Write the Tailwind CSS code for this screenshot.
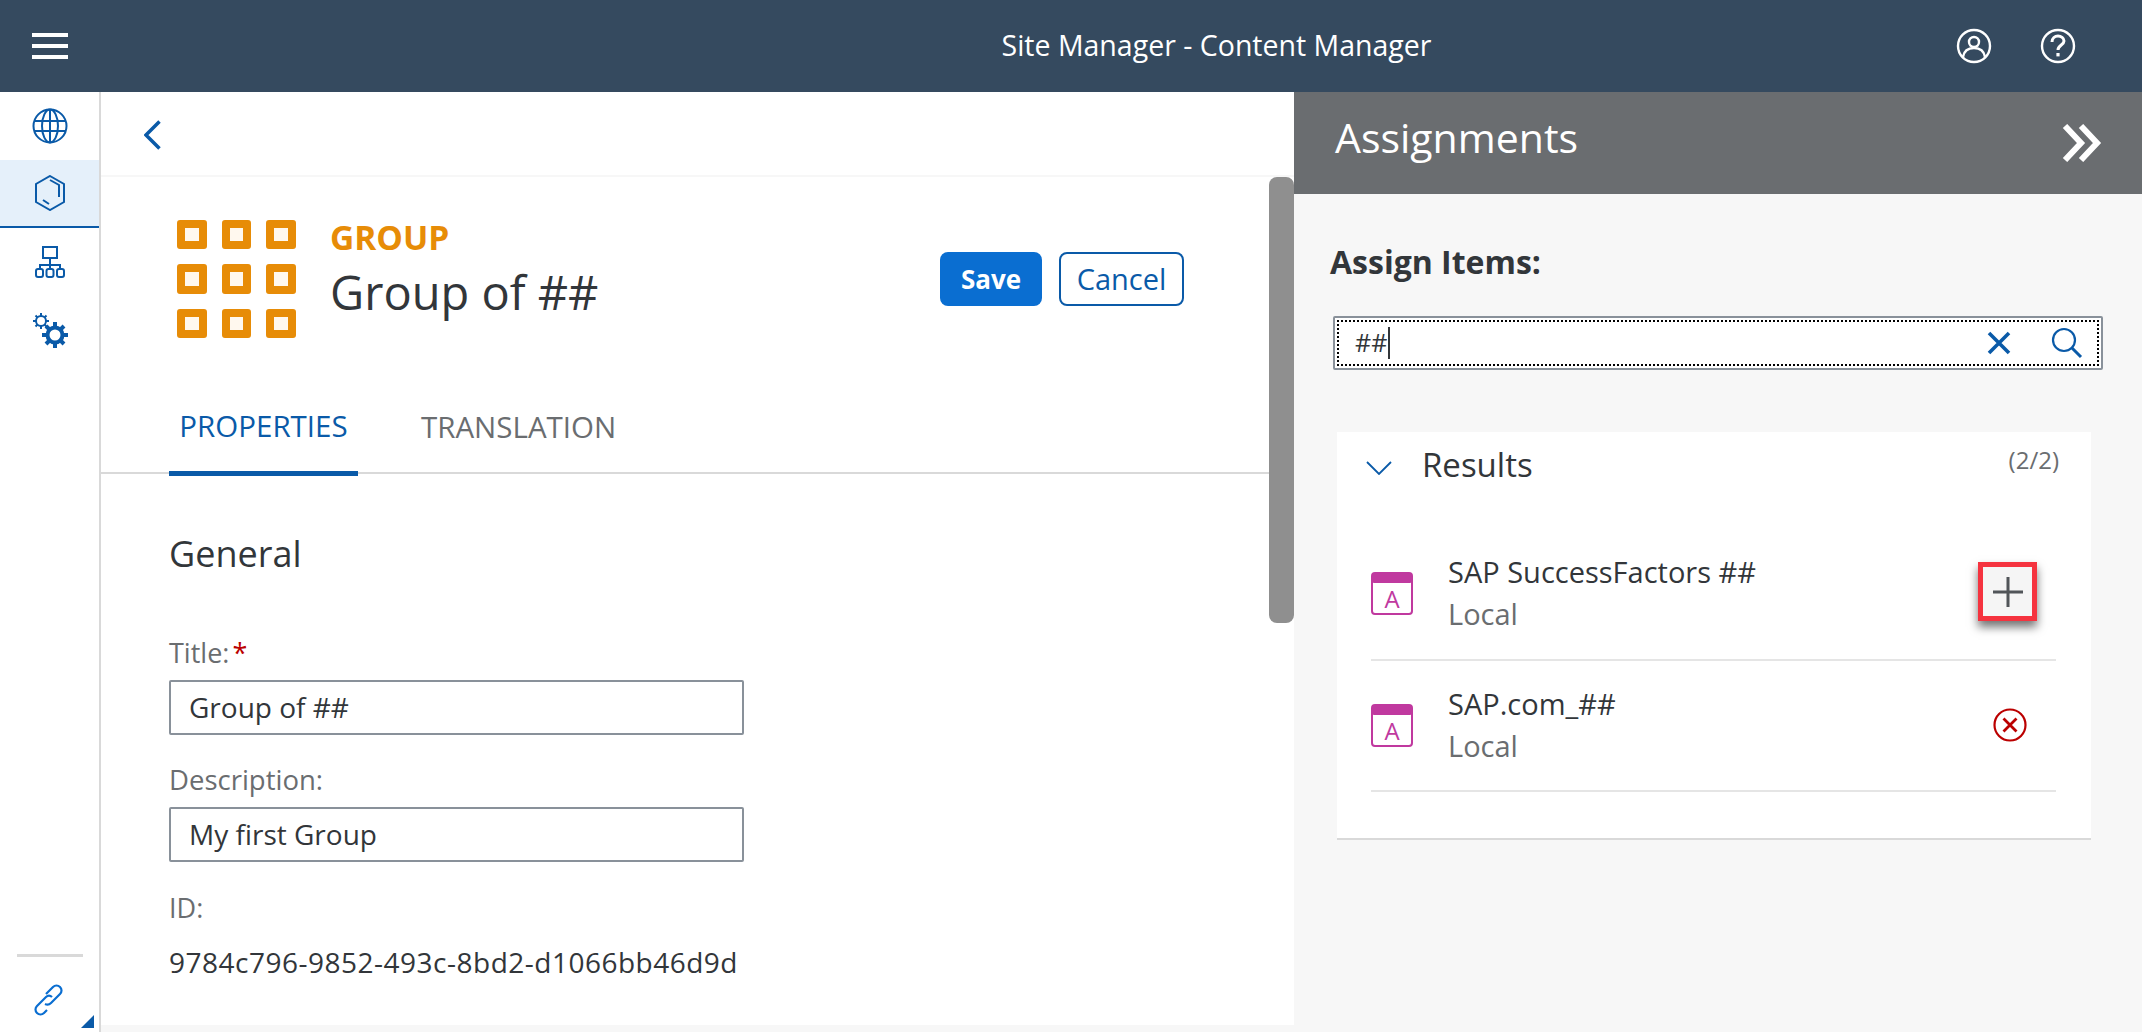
<!DOCTYPE html>
<html lang="en">
<head>
  <meta charset="UTF-8" />
  <title>Site Manager - Content Manager</title>
  <script src="https://cdn.jsdelivr.net/npm/@tailwindcss/browser@4"></script>
</head>
<body class="h-[1032px] overflow-hidden bg-white font-['Open_Sans',sans-serif] text-[#32363a]">
  <!-- shell bar -->
  <header class="h-[92px] bg-[#354a5f] flex items-center text-white">
    <div class="w-[99px] flex justify-center">
      <svg width="36" height="26" viewBox="0 0 36 26" fill="#fff"><rect x="0" y="0" width="36" height="4"/><rect x="0" y="11" width="36" height="4"/><rect x="0" y="22" width="36" height="4"/></svg>
    </div>
    <div class="flex-1 text-center text-[28.500px] pl-[378px] pb-[2px]">Site Manager - Content Manager</div>
    <div class="flex items-center gap-[48px] pr-[66px]">
      <svg width="36" height="36" viewBox="0 0 36 36" fill="none" stroke="#fff" stroke-width="2.4"><circle cx="18" cy="18" r="16"/><circle cx="18" cy="14" r="5"/><path d="M7 29c1-6 5-9 11-9s10 3 11 9"/></svg>
      <svg width="36" height="36" viewBox="0 0 36 36" fill="none" stroke="#fff" stroke-width="2.4"><circle cx="18" cy="18" r="16"/><path d="M12 14c0-4 3-6 6-6s6 2 6 5c0 4-6 4-6 9" stroke-width="3"/><rect x="16.4" y="25" width="3.2" height="3.4" fill="#fff" stroke="none"/></svg>
    </div>
  </header>

  <div class="flex h-[940px]">
    <!-- side navigation -->
    <nav class="w-[101px] shrink-0 border-r-2 border-[#d9d9d9] flex flex-col">
      <div class="h-[68px] flex items-center justify-center">
        <svg width="36" height="36" viewBox="0 0 36 36" fill="none" stroke="#0a5aa8" stroke-width="2"><circle cx="18" cy="18" r="16.5"/><ellipse cx="18" cy="18" rx="8" ry="16.5"/><path d="M18 1.5v33M2 13h32M2 23h32"/></svg>
      </div>
      <div class="h-[68px] flex items-center justify-center bg-[#e5f0fa] border-b-2 border-[#0a5aa8]">
        <svg width="30" height="36" viewBox="0 0 30 36" fill="none" stroke="#0a5aa8" stroke-width="2"><path d="M15 1 29 9v18l-14 8-14-8V9z"/><path d="M15 5l9 5v12M8 25l6 4"/></svg>
      </div>
      <div class="h-[68px] flex items-center justify-center">
        <svg width="30" height="32" viewBox="0 0 30 32" fill="none" stroke="#0a5aa8" stroke-width="2"><rect x="8" y="1" width="14" height="11"/><path d="M15 12v7M5 22v-3h20v3M15 19v3"/><rect x="1" y="23" width="7" height="8" rx="2"/><rect x="11.5" y="23" width="7" height="8" rx="2"/><rect x="22" y="23" width="7" height="8" rx="2"/></svg>
      </div>
      <div class="h-[68px] flex items-center justify-center">
        <svg width="36" height="36" viewBox="0 0 36 36" fill="none" stroke="#0a5aa8"><circle cx="9" cy="9" r="5" stroke-width="2"/><path d="M9 1v3M9 14v3M1 9h3M14 9h3M3.5 3.5l2 2M12.5 12.500l2 2M3.500 14.500l2-2M12.500 5.500l2-2" stroke-width="2"/><circle cx="23" cy="23" r="7.500" stroke-width="4"/><path d="M23 10v5M23 31v5M10 23h5M31 23h5M14 14l3.500 3.500M28.500 28.500 32 32M14 32l3.500-3.500M28.500 17.500 32 14" stroke-width="4"/></svg>
      </div>
      <div class="mt-auto h-[78px] flex flex-col items-center relative">
        <div class="w-[66px] h-[3px] bg-[#d9d9d9]"></div>
        <svg class="mt-[27px] -ml-[2px]" width="32" height="32" viewBox="0 0 32 32" fill="none" stroke="#0a6ed1" stroke-width="2.200"><path d="M13 10 20 3c2-2 5-2 7 0s2 5 0 7l-9 9c-2 2-4 2-6 1"/><path d="M19 13c-2-2-4-2-6 0l-9 9c-2 2-2 5 0 7s5 2 7 0l3-3"/></svg>
        <div class="absolute right-[5px] bottom-[4px] w-0 h-0 border-l-[13px] border-l-transparent border-b-[13px] border-b-[#0a5aa8]"></div>
      </div>
    </nav>

    <!-- group editor -->
    <main class="relative flex-1 flex flex-col min-w-0">
      <div class="h-[85px] shrink-0 border-b-2 border-[#f7f7f7] pl-[43px] pt-[28px]">
        <svg width="17" height="30" viewBox="0 0 17 30" fill="none" stroke="#0a5aa8" stroke-width="3.500"><path d="M15.500 1.500 2 15l13.500 13.500"/></svg>
      </div>
      <div class="h-[207px] shrink-0 flex pl-[76px] pr-[110px] pt-[43px]">
        <div class="grid grid-cols-3 gap-x-[15px] gap-y-[15px] w-[119px] h-[118px]">
          <div class="border-[8px] border-[#e78c07] rounded-[3px] bg-[#fff8ee]"></div>
          <div class="border-[8px] border-[#e78c07] rounded-[3px] bg-[#fff8ee]"></div>
          <div class="border-[8px] border-[#e78c07] rounded-[3px] bg-[#fff8ee]"></div>
          <div class="border-[8px] border-[#e78c07] rounded-[3px] bg-[#fff8ee]"></div>
          <div class="border-[8px] border-[#e78c07] rounded-[3px] bg-[#fff8ee]"></div>
          <div class="border-[8px] border-[#e78c07] rounded-[3px] bg-[#fff8ee]"></div>
          <div class="border-[8px] border-[#e78c07] rounded-[3px] bg-[#fff8ee]"></div>
          <div class="border-[8px] border-[#e78c07] rounded-[3px] bg-[#fff8ee]"></div>
          <div class="border-[8px] border-[#e78c07] rounded-[3px] bg-[#fff8ee]"></div>
        </div>
        <div class="ml-[34px] -mt-[1px]">
          <div class="text-[33.500px] leading-[36px] font-bold text-[#e78c07]">GROUP</div>
          <h1 class="text-[47px] leading-[56px] mt-[9px] text-[#32363a]">Group of ##</h1>
        </div>
        <div class="ml-auto flex gap-[17px] mt-[32px] h-[54px]">
          <button class="w-[102px] rounded-[8px] bg-[#0a6ed1] text-white text-[26px] font-bold">Save</button>
          <button class="w-[125px] rounded-[8px] border-2 border-[#0a5aa8] bg-white text-[#0a5aa8] text-[29px]">Cancel</button>
        </div>
      </div>
      <div class="h-[90px] shrink-0 flex pl-[68px] border-b-2 border-[#d9d9d9] mr-[25px] text-[29.500px]">
        <div class="w-[189px] h-[92px] pb-[2px] flex items-center justify-center border-b-[5px] border-[#0a5aa8] text-[#0a5aa8]">PROPERTIES</div>
        <div class="ml-[63px] h-[90px] pb-[4px] flex items-center text-[#6a6d70]">TRANSLATION</div>
      </div>
      <div class="flex-1 pl-[68px] flex flex-col">
        <h2 class="text-[36px] leading-[44px] mt-[58px]">General</h2>
        <label class="text-[27px] leading-[32px] mt-[61px] text-[#6a6d70]">Title:<span class="text-[#bb0000] ml-[3px]">*</span></label>
        <input class="w-[575px] h-[55px] mt-[11px] px-[18px] pb-[2px] border-2 border-[#89919a] rounded-[2px] text-[28px] text-[#32363a]" value="Group of ##" />
        <label class="text-[27.500px] leading-[32px] mt-[29px] text-[#6a6d70]">Description:</label>
        <input class="w-[575px] h-[55px] mt-[11px] px-[18px] pb-[2px] border-2 border-[#89919a] rounded-[2px] text-[28px] text-[#32363a]" value="My first Group" />
        <label class="text-[27px] leading-[32px] mt-[30px] text-[#6a6d70]">ID:</label>
        <div class="text-[28px] tracking-[0.5px] leading-[32px] mt-[22px] text-[#32363a]">9784c796-9852-493c-8bd2-d1066bb46d9d</div>
      </div>
      <div class="h-[7px] shrink-0 bg-[#f7f7f7]"></div>
      <div class="absolute right-0 top-[85px] w-[25px] h-[446px] rounded-[8px] bg-[#8f8f8f]"></div>
    </main>

    <!-- assignments panel -->
    <aside class="w-[848px] shrink-0 bg-[#f7f7f7] flex flex-col">
      <div class="h-[102px] shrink-0 bg-[#6a6d70] flex items-center justify-between pl-[41px] pr-[40px] text-white">
        <div class="text-[41px] pb-[10px]">Assignments</div>
        <svg width="40" height="38" viewBox="0 0 40 38" fill="none" stroke="#fff" stroke-width="6"><path d="M3 2l16 17L3 36M19 2l16 17-16 17"/></svg>
      </div>
      <div class="pl-[36px] mt-[48px] text-[32px] leading-[40px] font-bold text-[#32363a]">Assign Items:</div>
      <div class="ml-[39px] mt-[34px] w-[770px] h-[54px] shrink-0 border-2 border-[#89919a] rounded-[2px] bg-white p-[2px]">
        <div class="h-full border-2 border-dotted border-black flex items-center pl-[16px] pr-[14px]">
          <span class="text-[25px] text-[#32363a]">##</span>
          <span class="w-[2px] h-[32px] bg-[#32363a] ml-[1px]"></span>
          <svg class="ml-auto" width="24" height="24" viewBox="0 0 24 24" fill="none" stroke="#0a5aa8" stroke-width="3.600"><path d="M2 2l20 20M22 2 2 22"/></svg>
          <svg class="ml-[40px]" width="32" height="32" viewBox="0 0 32 32" fill="none" stroke="#0a5aa8" stroke-width="2.200"><circle cx="13" cy="13" r="11"/><path d="M21 21l9 9" stroke-width="3"/></svg>
        </div>
      </div>
      <section class="ml-[43px] mt-[62px] w-[754px] h-[408px] shrink-0 bg-white border-b-2 border-[#d9d9d9]">
        <div class="h-[96px] flex items-start pl-[29px] pr-[32px] pt-[13px]">
          <svg class="mt-[16px]" width="26" height="14" viewBox="0 0 26 14" fill="none" stroke="#0a5aa8" stroke-width="1.800"><path d="M1 1l12 12L25 1"/></svg>
          <span class="ml-[30px] text-[33px] leading-[40px]">Results</span>
          <span class="ml-auto text-[24px] leading-[30px] text-[#6a6d70]">(2/2)</span>
        </div>
        <div class="ml-[34px] mr-[35px]">
          <div class="h-[133px] flex items-center border-b-2 border-[#e5e5e5]">
            <svg width="42" height="43" viewBox="0 0 42 43"><rect x="1" y="1" width="40" height="41" rx="3" fill="#fff" stroke="#c0399f" stroke-width="2"/><rect x="1" y="1" width="40" height="10" rx="2" fill="#c0399f"/><text x="21" y="36" text-anchor="middle" font-family="Open Sans" font-size="24" fill="#c0399f">A</text></svg>
            <div class="ml-[35px] pb-[2px]">
              <div class="text-[29px] leading-[38px]">SAP SuccessFactors ##</div>
              <div class="text-[29px] leading-[38px] mt-[4px] text-[#6a6d70]">Local</div>
            </div>
            <button class="ml-auto mr-[19px] -mt-[4px] w-[59px] h-[59px] border-[5px] border-[#f5333f] bg-[#f5f5f5] shadow-[0_6px_9px_rgba(0,0,0,0.55)] flex items-center justify-center">
              <svg width="30" height="30" viewBox="0 0 30 30" stroke="#515559" stroke-width="3"><path d="M15 0v30M0 15h30"/></svg>
            </button>
          </div>
          <div class="h-[131px] flex items-center border-b-2 border-[#e5e5e5]">
            <svg width="42" height="43" viewBox="0 0 42 43"><rect x="1" y="1" width="40" height="41" rx="3" fill="#fff" stroke="#c0399f" stroke-width="2"/><rect x="1" y="1" width="40" height="10" rx="2" fill="#c0399f"/><text x="21" y="36" text-anchor="middle" font-family="Open Sans" font-size="24" fill="#c0399f">A</text></svg>
            <div class="ml-[35px] pb-[2px]">
              <div class="text-[29px] leading-[38px]">SAP.com_##</div>
              <div class="text-[29px] leading-[38px] mt-[4px] text-[#6a6d70]">Local</div>
            </div>
            <svg class="ml-auto mr-[29px] -mt-[2px]" width="34" height="34" viewBox="0 0 34 34" fill="none" stroke="#bb0000" stroke-width="2.200"><circle cx="17" cy="17" r="15.500"/><path d="M10.500 10.500l13 13M23.500 10.500l-13 13" stroke-width="2.800"/></svg>
          </div>
        </div>
      </section>
    </aside>
  </div>
</body>
</html>
